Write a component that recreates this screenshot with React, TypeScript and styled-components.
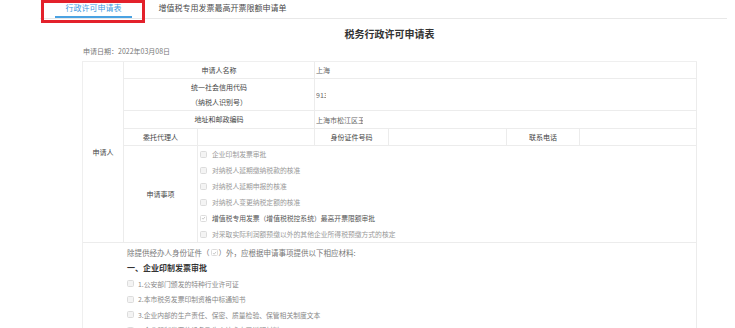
import React from "react";
import styled, { createGlobalStyle } from "styled-components";

const GlobalStyle = createGlobalStyle`
  *, *::before, *::after { box-sizing: border-box; }
  html, body { margin: 0; padding: 0; background: #fff; overflow: hidden; }
  body { font-family: "Noto Sans CJK SC", "Noto Sans", sans-serif; }
`;

const Page = styled.div`
  width: 735px;
  height: 328px;
  overflow: hidden;
  position: relative;
  background: #fff;
`;

const TabBar = styled.div`
  position: relative;
  margin-left: 40px;
  width: 687px;
  height: 19px;
  border-bottom: 1px solid #e8e8e8;
  display: flex;
  gap: 16px;
  padding-left: 15px;
`;

const Tab = styled.div<{ $active?: boolean }>`
  height: 18px;
  padding: 0 10.5px;
  font-size: 8px;
  line-height: 16px;
  white-space: nowrap;
  color: ${(p) => (p.$active ? "#3f9be2" : "#4a4a4a")};
  border-bottom: 2px solid ${(p) => (p.$active ? "#4aa2e2" : "transparent")};
`;

const Annotation = styled.div`
  position: absolute;
  left: 1px;
  top: 0;
  width: 104px;
  height: 23px;
  border: 3px solid #e3212b;
  pointer-events: none;
`;

const Main = styled.div`
  margin-left: 82px;
  width: 615px;
`;

const Title = styled.div`
  margin-top: 8px;
  text-align: center;
  font-size: 10px;
  line-height: 14px;
  font-weight: 700;
  color: #333;
`;

const DateLine = styled.div`
  margin-top: 5px;
  padding-left: 1px;
  font-size: 7px;
  line-height: 10px;
  color: #777;
`;

const Form = styled.div`
  margin-top: 5px;
  display: grid;
  grid-template-columns: 41px 74px 117px 74px 118px 73px 117px;
  grid-template-rows: 17px 32px 18px 17px 97px auto;
  border-top: 1px solid #efefef;
  border-left: 1px solid #efefef;
`;

const Cell = styled.div<{ $col: string; $row: string; $noRight?: boolean; $noBottom?: boolean }>`
  grid-column: ${(p) => p.$col};
  grid-row: ${(p) => p.$row};
  border-right: ${(p) => (p.$noRight ? "none" : "1px solid #ececec")};
  border-bottom: ${(p) => (p.$noBottom ? "none" : "1px solid #ececec")};
  display: flex;
  align-items: center;
  font-size: 7px;
  line-height: 10px;
  white-space: nowrap;
  overflow: hidden;
`;

const Label = styled(Cell)`
  justify-content: center;
  flex-direction: column;
  text-align: center;
  color: #444;
  line-height: 15px;
`;

const Value = styled(Cell)`
  justify-content: flex-start;
  padding-left: 1px;
  color: #666;
`;

const Clip = styled.span<{ $w: number }>`
  display: inline-block;
  width: ${(p) => p.$w}px;
  overflow: hidden;
  white-space: nowrap;
`;

const ItemList = styled(Cell)`
  flex-direction: column;
  align-items: stretch;
  justify-content: flex-start;
  padding-left: 2px;
`;

const Item = styled.div<{ $checked?: boolean }>`
  height: 16px;
  display: flex;
  align-items: center;
  gap: 5px;
  font-size: 6.8px;
  color: ${(p) => (p.$checked ? "#555" : "#999")};
`;

const Box = styled.span<{ $checked?: boolean }>`
  flex: none;
  display: inline-flex;
  align-items: center;
  justify-content: center;
  width: 7px;
  height: 7px;
  border: 1px solid #dcdcdc;
  border-radius: 1.5px;
  background: ${(p) => (p.$checked ? "#fff" : "#f4f4f4")};
  vertical-align: middle;
`;

const Materials = styled(Cell)`
  flex-direction: column;
  align-items: flex-start;
  justify-content: flex-start;
  padding: 2px 0 0 3px;
  min-height: 120px;
`;

const Intro = styled.div`
  height: 15.5px;
  display: flex;
  align-items: center;
  font-size: 7.5px;
  color: #777;
`;

const Heading = styled.div`
  height: 15.5px;
  display: flex;
  align-items: center;
  font-size: 8px;
  font-weight: 700;
  color: #333;
`;

const MatItem = styled.div`
  height: 15.5px;
  display: flex;
  align-items: center;
  gap: 4px;
  font-size: 6.8px;
  color: #888;
`;

const InlineBox = styled(Box)`
  margin: 0 1px;
`;

function Check({ checked }: { checked?: boolean }) {
  return (
    <Box $checked={checked}>
      {checked && (
        <svg width="6" height="6" viewBox="0 0 10 10">
          <path d="M2 5.2 L4.2 7.4 L8.2 2.8" fill="none" stroke="#aaa" strokeWidth="1.3" />
        </svg>
      )}
    </Box>
  );
}

const applyItems: { text: string; checked?: boolean }[] = [
  { text: "企业印制发票审批" },
  { text: "对纳税人延期缴纳税款的核准" },
  { text: "对纳税人延期申报的核准" },
  { text: "对纳税人变更纳税定额的核准" },
  { text: "增值税专用发票（增值税税控系统）最高开票限额审批", checked: true },
  { text: "对采取实际利润额预缴以外的其他企业所得税预缴方式的核定" },
];

const materials = [
  "1.公安部门颁发的特种行业许可证",
  "2.本市税务发票印制资格中标通知书",
  "3.企业内部的生产责任、保密、质量检验、保管相关制度文本",
  "4.企业印制发票的设备及生产技术水平说明材料",
];

export default function App() {
  return (
    <Page>
      <GlobalStyle />
      <TabBar>
        <Tab $active>行政许可申请表</Tab>
        <Tab>增值税专用发票最高开票限额申请单</Tab>
        <Annotation />
      </TabBar>
      <Main>
        <Title>税务行政许可申请表</Title>
        <DateLine>申请日期：2022年03月08日</DateLine>
        <Form>
          <Label $col="1" $row="1 / 6">申请人</Label>

          <Label $col="2 / 4" $row="1">申请人名称</Label>
          <Value $col="4 / 8" $row="1">上海</Value>

          <Label $col="2 / 4" $row="2">
            <span>统一社会信用代码</span>
            <span>（纳税人识别号）</span>
          </Label>
          <Value $col="4 / 8" $row="2">
            <Clip $w={10}>91310117MA1J</Clip>
          </Value>

          <Label $col="2 / 4" $row="3">地址和邮政编码</Label>
          <Value $col="4 / 8" $row="3">
            <Clip $w={47}>上海市松江区玉树路</Clip>
          </Value>

          <Label $col="2" $row="4">委托代理人</Label>
          <Value $col="3" $row="4" />
          <Label $col="4" $row="4">身份证件号码</Label>
          <Value $col="5" $row="4" />
          <Label $col="6" $row="4">联系电话</Label>
          <Value $col="7" $row="4" />

          <Label $col="2" $row="5">申请事项</Label>
          <ItemList $col="3 / 8" $row="5">
            {applyItems.map((it) => (
              <Item key={it.text} $checked={it.checked}>
                <Check checked={it.checked} />
                <span>{it.text}</span>
              </Item>
            ))}
          </ItemList>

          <Cell $col="1" $row="6" $noRight $noBottom />
          <Materials $col="2 / 8" $row="6" $noBottom>
            <Intro>
              除提供经办人身份证件（
              <InlineBox $checked>
                <svg width="6" height="6" viewBox="0 0 10 10">
                  <path d="M2 5.2 L4.2 7.4 L8.2 2.8" fill="none" stroke="#aaa" strokeWidth="1.3" />
                </svg>
              </InlineBox>
              ）外，应根据申请事项提供以下相应材料:
            </Intro>
            <Heading>一、企业印制发票审批</Heading>
            {materials.map((m) => (
              <MatItem key={m}>
                <Check />
                <span>{m}</span>
              </MatItem>
            ))}
          </Materials>
        </Form>
      </Main>
    </Page>
  );
}
